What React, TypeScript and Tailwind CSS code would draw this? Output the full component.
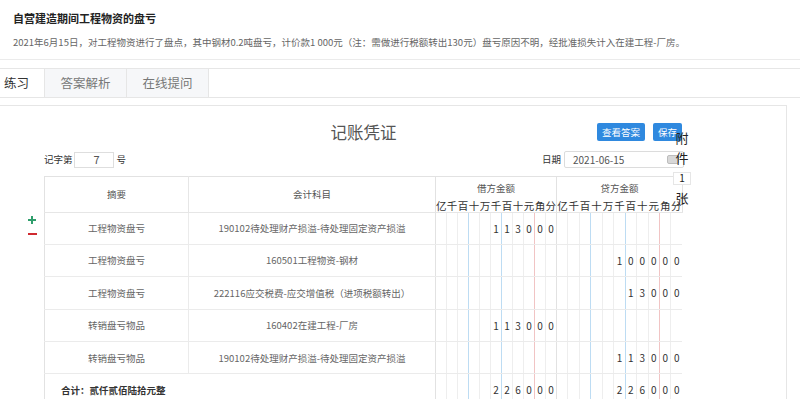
type Row = { summary: string; account: string; debit: string; credit: string };

const rows: Row[] = [
  { summary: '工程物资盘亏', account: '190102待处理财产损溢-待处理固定资产损溢', debit: '113000', credit: '' },
  { summary: '工程物资盘亏', account: '160501工程物资-钢材', debit: '', credit: '100000' },
  { summary: '工程物资盘亏', account: '222116应交税费-应交增值税（进项税额转出）', debit: '', credit: '13000' },
  { summary: '转销盘亏物品', account: '160402在建工程-厂房', debit: '113000', credit: '' },
  { summary: '转销盘亏物品', account: '190102待处理财产损溢-待处理固定资产损溢', debit: '', credit: '113000' },
];

const units = ['亿', '千', '百', '十', '万', '千', '百', '十', '元', '角', '分'];

function digitsOf(amount: string) {
  const off = units.length - amount.length;
  return units.map((_, i) => (i >= off ? amount[i - off] : ''));
}

// separator colours for the amount grid: group edge, thousands (blue), decimal (red)
function lineClass(i: number) {
  if (i === 0) return 'border-l border-l-[#e2e2e2]';
  if (i === 3 || i === 6) return 'border-l border-l-[#bddcf3]';
  if (i === 9) return 'border-l border-l-[#f1c4c4]';
  return 'border-l border-l-[#eeeeee]';
}

function AmountCells({ amount }: { amount: string }) {
  return (
    <>
      {digitsOf(amount).map((d, i) => (
        <td key={i} className={`${lineClass(i)} border-b border-b-[#ebebeb] text-center text-[10px] text-[#333]`}>
          {d}
        </td>
      ))}
    </>
  );
}

export default function App() {
  return (
    <div className="min-h-screen bg-white font-['Noto_Sans_CJK_SC','Microsoft_YaHei',sans-serif] text-[#333]">
      <header className="h-[60px] border-b border-[#ebebeb] px-[13px] pt-[10px]">
        <h1 className="text-[11px] leading-[16px] font-bold text-[#222]">自营建造期间工程物资的盘亏</h1>
        <p className="mt-[8px] text-[9.5px] leading-[16px] text-[#666]">
          2021年6月15日，对工程物资进行了盘点，其中钢材0.2吨盘亏，计价款1 000元（注：需做进行税额转出130元）盘亏原因不明，经批准损失计入在建工程-厂房。
        </p>
      </header>

      <nav className="mt-[8px] flex h-[30px] border-y border-[#e6e6e6] text-[12.5px]">
        <div className="flex w-[44px] items-center pl-[4px] text-[#333]">练习</div>
        <div className="flex w-[83px] items-center justify-center border-x border-[#e6e6e6] bg-[#f6f7f9] text-[#777]">答案解析</div>
        <div className="flex w-[82px] items-center justify-center border-r border-[#e6e6e6] bg-[#f6f7f9] text-[#777]">在线提问</div>
      </nav>

      <section className="mt-[7px] h-[300px] w-[787px] border-t border-r border-[#e6e6e6]">
        <div className="flex">
          <div className="flex w-[44px] flex-col items-start pt-[110px] pl-[28px]">
            <svg width="8" height="8" viewBox="0 0 8 8">
              <path d="M4 0v8M0 4h8" stroke="#2f9e6c" strokeWidth="2" />
            </svg>
            <svg className="mt-[9px]" width="9" height="2" viewBox="0 0 9 2">
              <path d="M0 1h9" stroke="#cf2a30" strokeWidth="2" />
            </svg>
          </div>

          <div className="relative w-[639px]">
            <div className="grid grid-cols-[1fr_auto_1fr] items-center pt-[17px]">
              <div />
              <div className="text-[16.5px] leading-[18px] text-[#555]">记账凭证</div>
              <div className="flex justify-end gap-[8px] pr-[1px]">
                <button className="h-[18px] w-[48px] rounded-[2px] bg-[#2f89df] text-[9.5px] text-white">查看答案</button>
                <button className="h-[18px] w-[29px] rounded-[2px] bg-[#2f89df] text-[9.5px] text-white">保存</button>
              </div>
            </div>

            <div className="mt-[10px] flex h-[17px] items-center justify-between text-[9.5px] text-[#333]">
              <div className="flex items-center">
                <span>记字第</span>
                <span className="ml-[1px] flex h-[16px] w-[40px] items-center justify-center border border-[#dedede] pl-[6px] text-[11px] text-[#555]">7</span>
                <span className="ml-[3px]">号</span>
              </div>
              <div className="-mr-[1px] flex items-center">
                <span>日期</span>
                <span className="ml-[3px] flex h-[17px] w-[120px] items-center justify-between rounded-[2px] border border-[#dcdcdc] pl-[8px] pr-[4px] text-[10px] text-[#555]">
                  2021-06-15
                  <span className="h-[9px] w-[12px] rounded-[2px] border border-[#bdbdbd] bg-[#d8d8d8]" />
                </span>
              </div>
            </div>

            <table className="mt-[8px] w-[638px] table-fixed border-collapse border-t border-l border-[#e2e2e2] text-[9.5px] text-[#666]">
              <colgroup>
                <col className="w-[144px]" />
                <col className="w-[247px]" />
                {units.map((_, i) => (
                  <col key={`d${i}`} className="w-[11px]" />
                ))}
                {units.map((_, i) => (
                  <col key={`c${i}`} className="w-[11.45px]" />
                ))}
              </colgroup>
              <thead>
                <tr className="h-[22px]">
                  <th rowSpan={2} className="border-b border-[#e6e6e6] font-normal text-[#555]">摘要</th>
                  <th rowSpan={2} className="border-b border-l border-[#e6e6e6] font-normal text-[#555]">会计科目</th>
                  <th colSpan={11} className="border-l border-[#e2e2e2] font-normal text-[#555]">借方金额</th>
                  <th colSpan={11} className="border-l border-r border-[#e2e2e2] font-normal text-[#555]">贷方金额</th>
                </tr>
                <tr className="h-[13px]">
                  {[...units, ...units].map((u, i) => (
                    <th
                      key={i}
                      className={`${i === 0 || i === 11 ? 'border-l border-l-[#e2e2e2]' : ''} ${i === 21 ? 'border-r border-r-[#e2e2e2]' : ''} border-b border-b-[#e6e6e6] p-0 text-center text-[10.5px] leading-[13px] font-normal text-[#333]`}
                    >
                      {u}
                    </th>
                  ))}
                </tr>
              </thead>
              <tbody>
                {rows.map((r, idx) => (
                  <tr key={idx} className="h-[32.4px]">
                    <td className="border-b border-[#ebebeb] text-center">{r.summary}</td>
                    <td className="border-b border-l border-[#ebebeb] text-center">{r.account}</td>
                    <AmountCells amount={r.debit} />
                    <AmountCells amount={r.credit} />
                  </tr>
                ))}
                <tr className="h-[32px]">
                  <td colSpan={2} className="border-b border-[#ebebeb] pl-[16px] text-left font-bold text-[#333]">
                    合计：贰仟贰佰陆拾元整
                  </td>
                  <AmountCells amount="226000" />
                  <AmountCells amount="226000" />
                </tr>
              </tbody>
            </table>

            <div className="absolute top-[22px] left-[629px] flex w-[18px] flex-col items-center text-[13px] leading-[20px] text-[#222]">
              <span>附</span>
              <span>件</span>
              <span className="flex h-[20px] items-center">
                <span className="flex h-[13px] w-[18px] items-center justify-center border border-[#e6e6e6] bg-white text-[10px] leading-none">1</span>
              </span>
              <span>张</span>
            </div>
          </div>
        </div>
      </section>
    </div>
  );
}
